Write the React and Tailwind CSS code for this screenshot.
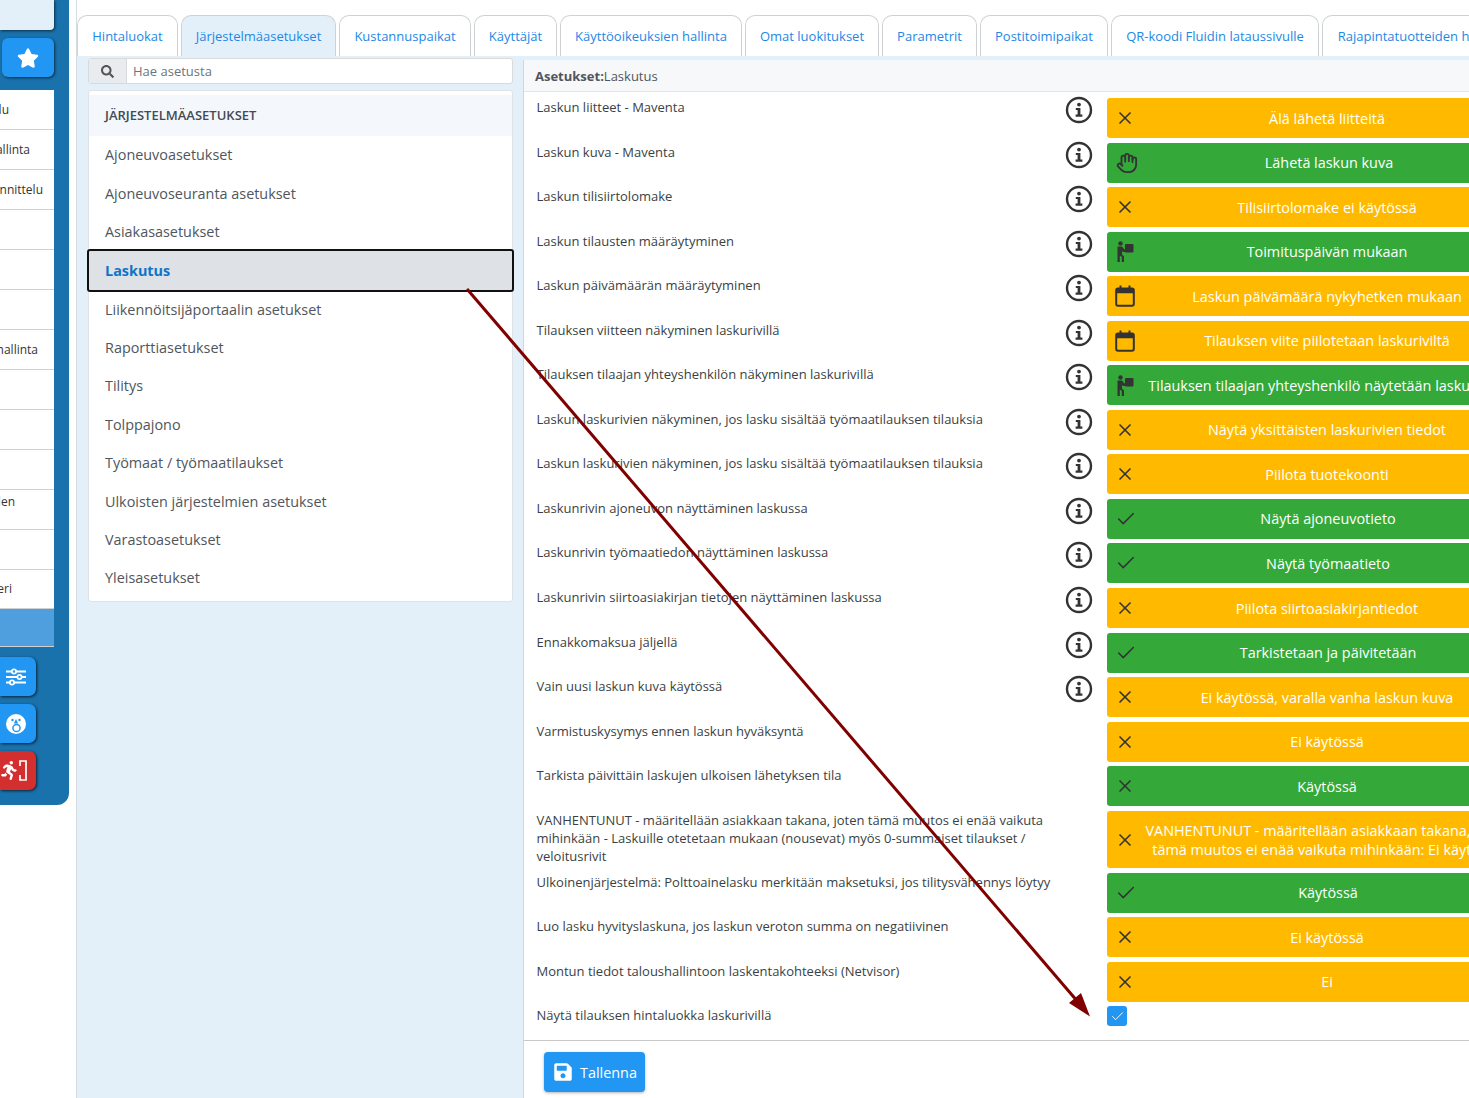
import { Check, Hand, X } from "lucide-react";
import { FaSearch, FaStar, FaSave } from "react-icons/fa";
import { FaPersonRunning } from "react-icons/fa6";

const tabs = [
  { label: "Hintaluokat", width: "w-[101px]" },
  { label: "Järjestelmäasetukset", width: "w-[155px]", active: true },
  { label: "Kustannuspaikat", width: "w-[132px]" },
  { label: "Käyttäjät", width: "w-[83px]" },
  { label: "Käyttöoikeuksien hallinta", width: "w-[182px]" },
  { label: "Omat luokitukset", width: "w-[134px]" },
  { label: "Parametrit", width: "w-[95px]" },
  { label: "Postitoimipaikat", width: "w-[128px]" },
  { label: "QR-koodi Fluidin lataussivulle", width: "w-[208px]" },
  { label: "Rajapintatuotteiden hallinta", width: "w-[200px]" },
];

const groups = [
  "Ajoneuvoasetukset",
  "Ajoneuvoseuranta asetukset",
  "Asiakasasetukset",
  "Laskutus",
  "Liikennöitsijäportaalin asetukset",
  "Raporttiasetukset",
  "Tilitys",
  "Tolppajono",
  "Työmaat / työmaatilaukset",
  "Ulkoisten järjestelmien asetukset",
  "Varastoasetukset",
  "Yleisasetukset",
];

const rows = [
  { text: "Laskun liitteet - Maventa", tone: "amber", icon: "x", value: "Älä lähetä liitteitä", info: true },
  { text: "Laskun kuva - Maventa", tone: "green", icon: "hand", value: "Lähetä laskun kuva", info: true },
  { text: "Laskun tilisiirtolomake", tone: "amber", icon: "x", value: "Tilisiirtolomake ei käytössä", info: true },
  { text: "Laskun tilausten määräytyminen", tone: "green", icon: "carry", value: "Toimituspäivän mukaan", info: true },
  { text: "Laskun päivämäärän määräytyminen", tone: "amber", icon: "calendar", value: "Laskun päivämäärä nykyhetken mukaan", info: true },
  { text: "Tilauksen viitteen näkyminen laskurivillä", tone: "amber", icon: "calendar", value: "Tilauksen viite piilotetaan laskuriviltä", info: true },
  { text: "Tilauksen tilaajan yhteyshenkilön näkyminen laskurivillä", tone: "green", icon: "carry", value: "Tilauksen tilaajan yhteyshenkilö näytetään laskurivillä", info: true },
  { text: "Laskun laskurivien näkyminen, jos lasku sisältää työmaatilauksen tilauksia", tone: "amber", icon: "x", value: "Näytä yksittäisten laskurivien tiedot", info: true },
  { text: "Laskun laskurivien näkyminen, jos lasku sisältää työmaatilauksen tilauksia", tone: "amber", icon: "x", value: "Piilota tuotekoonti", info: true },
  { text: "Laskunrivin ajoneuvon näyttäminen laskussa", tone: "green", icon: "check", value: "Näytä ajoneuvotieto", info: true },
  { text: "Laskunrivin työmaatiedon näyttäminen laskussa", tone: "green", icon: "check", value: "Näytä työmaatieto", info: true },
  { text: "Laskunrivin siirtoasiakirjan tietojen näyttäminen laskussa", tone: "amber", icon: "x", value: "Piilota siirtoasiakirjantiedot", info: true },
  { text: "Ennakkomaksua jäljellä", tone: "green", icon: "check", value: "Tarkistetaan ja päivitetään", info: true },
  { text: "Vain uusi laskun kuva käytössä", tone: "amber", icon: "x", value: "Ei käytössä, varalla vanha laskun kuva", info: true },
  { text: "Varmistuskysymys ennen laskun hyväksyntä", tone: "amber", icon: "x", value: "Ei käytössä" },
  { text: "Tarkista päivittäin laskujen ulkoisen lähetyksen tila", tone: "green", icon: "x", value: "Käytössä" },
  {
    text: "VANHENTUNUT - määritellään asiakkaan takana, joten tämä muutos ei enää vaikuta mihinkään - Laskuille otetetaan mukaan (nousevat) myös 0-summaiset tilaukset / veloitusrivit",
    tone: "amber",
    icon: "x",
    value: "VANHENTUNUT - määritellään asiakkaan takana, joten",
    value2: "tämä muutos ei enää vaikuta mihinkään: Ei käytössä",
    tall: true,
  },
  { text: "Ulkoinenjärjestelmä: Polttoainelasku merkitään maksetuksi, jos tilitysvähennys löytyy", tone: "green", icon: "check", value: "Käytössä" },
  { text: "Luo lasku hyvityslaskuna, jos laskun veroton summa on negatiivinen", tone: "amber", icon: "x", value: "Ei käytössä" },
  { text: "Montun tiedot taloushallintoon laskentakohteeksi (Netvisor)", tone: "amber", icon: "x", value: "Ei" },
];

const sideRows = [
  { text: "lu", pad: "pr-[45px]" },
  { text: "allinta", pad: "pr-[24px]" },
  { text: "nnittelu", pad: "pr-[11px]" },
  { text: "" },
  { text: "" },
  { text: "" },
  { text: "hallinta", pad: "pr-[16px]" },
  { text: "" },
  { text: "" },
  { text: "" },
  { text: "len", pad: "pr-[39px] pb-[16px]" },
  { text: "" },
  { text: "eri", pad: "pr-[42px]" },
];

function InfoIcon() {
  return (
    <svg width="28" height="28" viewBox="0 0 28 28" fill="none">
      <circle cx="14" cy="14" r="12" stroke="#333" strokeWidth="2.4" />
      <circle cx="14" cy="8.6" r="1.9" fill="#333" />
      <path d="M10.8 12h4.6v6.6h2v2.1h-6.8v-2.1h2v-4.5h-1.8z" fill="#333" />
    </svg>
  );
}

function CarryIcon() {
  return (
    <svg width="17" height="21" viewBox="0 0 17 21" fill="#333">
      <circle cx="3.5" cy="2.5" r="2.2" />
      <rect x="8" y="3" width="8.5" height="8.5" rx="1" />
      <path d="M0.5 5.5h4.5l2.5 3h1v2.5h-2.5l-1-1v3.5l2 2V21H4.8v-5l-2-1.5V21H0.5z" />
    </svg>
  );
}

function CalendarIcon() {
  return (
    <svg width="20" height="22" viewBox="0 0 20 22" fill="none">
      <rect x="1.2" y="3.4" width="17.6" height="17.4" rx="1.8" stroke="#333" strokeWidth="2" />
      <path d="M1.2 4.8a1.6 1.6 0 0 1 1.6-1.6h14.4a1.6 1.6 0 0 1 1.6 1.6v3.4H1.2z" fill="#333" />
      <path d="M5.5 0.5v4M14.5 0.5v4" stroke="#333" strokeWidth="2" />
    </svg>
  );
}

function RowIcon({ name }) {
  if (name === "x") return <X size={20} strokeWidth={2} color="#333" />;
  if (name === "check") return <Check size={22} strokeWidth={1.7} color="#333" />;
  if (name === "hand") return <Hand size={22} strokeWidth={2} color="#333" />;
  if (name === "carry") return <CarryIcon />;
  return <CalendarIcon />;
}

function SettingRow({ row }) {
  return (
    <div className={`flex shrink-0 ${row.tall ? "h-[57.5px]" : "h-[40px]"} mb-[4.56px]`}>
      <div className="w-[531px] shrink-0 pl-[12.5px] text-[13px] leading-[18px] text-[#3a3f44]">{row.text}</div>
      <div className="w-[40px] shrink-0 pl-[10px] -mt-[2px]">{row.info && <InfoIcon />}</div>
      <div
        className={`ml-[12px] grid w-[440px] shrink-0 grid-cols-[40px_360px_40px] items-center rounded-[3px] text-[14.4px] leading-[19px] text-white ${
          row.tone === "amber" ? "bg-[#ffba00]" : "bg-[#34a93a]"
        }`}
      >
        <span className={`flex justify-center ${row.icon === "hand" ? "pr-[1px]" : row.icon === "check" ? "pr-[2px]" : "pr-[4px]"}`}>
          <RowIcon name={row.icon} />
        </span>
        <span
          className={`flex flex-col items-center whitespace-nowrap text-center ${
            row.icon === "hand" ? "pl-[4px]" : row.icon === "check" ? "pl-[2px]" : ""
          }`}
        >
          <span>{row.value}</span>
          {row.value2 && <span>{row.value2}</span>}
        </span>
      </div>
    </div>
  );
}

function Sidebar() {
  return (
    <div className="w-[77px] shrink-0 border-r border-[#d5dde3] bg-white">
      <div className="flex h-[805px] w-[69px] flex-col rounded-br-[12px] bg-[#1a72ad] pr-[15px]">
        <div className="h-[30px] rounded-br-[4px] bg-[#e3f0f9] shadow-[1px_1px_3px_rgba(0,0,0,0.6)]" />
        <div className="ml-[2px] mt-[8px] flex h-[39px] items-center justify-center rounded-[6px] bg-[#2196f3] shadow-[1px_1px_3px_rgba(0,0,0,0.6)]">
          <FaStar size={22} color="white" />
        </div>
        {/* clipped menu */}
        <div className="mt-[13px] bg-white">
          {sideRows.map((row, i) => (
            <div
              key={i}
              className={`flex h-[40px] items-center justify-end overflow-hidden whitespace-nowrap border-b border-[#d0d0d0] text-[12px] text-[#333] last:h-[39px] ${row.pad || ""}`}
            >
              {row.text}
            </div>
          ))}
        </div>
        <div className="h-[38px] border-b border-[#d0d0d0] bg-[#4f9fdf]" />
        <div className="mt-[10px] flex w-[36px] flex-col gap-[8px]">
          <div className="flex h-[39px] items-center justify-center rounded-r-[7px] bg-[#2196f3] pr-[4px] shadow-[1px_1px_3px_rgba(0,0,0,0.7)]">
            <svg width="20" height="18" viewBox="0 0 20 18" fill="none" stroke="white" strokeWidth="1.8">
              <path d="M0 3.5h20M0 9h20M0 14.5h20" />
              <circle cx="8" cy="3.5" r="2.1" fill="#2196f3" />
              <circle cx="13.5" cy="9" r="2.1" fill="#2196f3" />
              <circle cx="6" cy="14.5" r="2.1" fill="#2196f3" />
            </svg>
          </div>
          <div className="flex h-[39px] items-center justify-center rounded-r-[7px] bg-[#2196f3] pr-[4px] shadow-[1px_1px_3px_rgba(0,0,0,0.7)]">
            <svg width="20" height="20" viewBox="0 0 20 20">
              <circle cx="10" cy="10" r="10" fill="white" />
              <circle cx="6.5" cy="6" r="1.2" fill="#2196f3" />
              <circle cx="13.5" cy="6" r="1.2" fill="#2196f3" />
              <path d="M10 5l2.2 4.5H7.8z" fill="#2196f3" />
              <circle cx="10.5" cy="14" r="3.6" fill="none" stroke="#2196f3" strokeWidth="1.5" />
            </svg>
          </div>
          <div className="flex h-[39px] items-center justify-center rounded-r-[7px] bg-[#d32f2f] pr-[9px] shadow-[1px_1px_3px_rgba(0,0,0,0.7)]">
            <FaPersonRunning size={19} color="white" />
            <svg width="8" height="21" viewBox="0 0 8 21" fill="none" stroke="white" strokeWidth="1.7">
              <path d="M1 6V1h6v19H1v-5" />
            </svg>
          </div>
        </div>
      </div>
    </div>
  );
}

export default function App() {
  return (
    <div className="relative flex h-[1098px] w-[1469px] overflow-hidden bg-white font-['Open_Sans',sans-serif]">
      <Sidebar />

      <div className="flex min-w-0 flex-1 flex-col">
        {/* Tabs */}
        <div className="flex h-[56px] shrink-0 gap-[3px] pt-[15px]">
          {tabs.map((tab) => (
            <div
              key={tab.label}
              className={`flex ${tab.width} h-[41px] shrink-0 items-center justify-center whitespace-nowrap rounded-t-[10px] border border-b-0 border-[#cfd2d4] pt-[1px] text-[13px] text-[#1e88e5] ${
                tab.active ? "bg-[#e3f0f9]" : "bg-white"
              }`}
            >
              {tab.label}
            </div>
          ))}
        </div>

        <div className="flex min-h-0 flex-1 bg-[#e3f0f9] pl-[11px]">
          {/* Left column */}
          <div className="w-[425px] shrink-0 pt-[2px]">
            <div className="flex h-[26px] rounded-[3px] border border-[#d8dadc] bg-white">
              <div className="flex w-[38px] items-center justify-center border-r border-[#d8dadc] bg-[#e9ecef]">
                <FaSearch size={13} color="#555" />
              </div>
              <div className="flex items-center pl-[6px] pt-[1px] text-[13px] text-[#6c757d]">Hae asetusta</div>
            </div>
            <div className="relative mt-[6px] rounded-[3px] border border-[#dfe3e6] bg-white">
              <div className="mt-[4px] flex h-[41px] items-center bg-[#f4f8fc] pl-[16px] pt-[1px] text-[13px] font-semibold text-[#444b52]">
                JÄRJESTELMÄASETUKSET
              </div>
              <div className="pb-[4px]">
                {groups.map((group) =>
                  group === "Laskutus" ? (
                    <div
                      key={group}
                      className="-mx-[2px] flex h-[43px] -my-[2px] items-center rounded-[3px] border-2 border-[#111] bg-[#dee2e6] pl-[16px] text-[14.4px] font-bold text-[#0d74c9]"
                    >
                      {group}
                    </div>
                  ) : (
                    <div key={group} className="flex h-[38.4px] items-center pl-[16px] text-[14.4px] text-[#50565c]">
                      {group}
                    </div>
                  ),
                )}
              </div>
            </div>
          </div>

          {/* Settings */}
          <div className="ml-[10px] mt-[4px] flex min-w-0 flex-1 flex-col overflow-hidden border-l border-[#d3d6d9] bg-white">
            <div className="flex h-[32px] shrink-0 items-center border-b border-[#e3e5e8] bg-[#f7f8fa] pl-[11px] pt-[2px] text-[13px] text-[#50565c]">
              <span className="font-bold">Asetukset:</span>Laskutus
            </div>
            <div className="flex h-[948px] shrink-0 flex-col pt-[6px]">
              {rows.map((row, i) => (
                <SettingRow key={i} row={row} />
              ))}
              <div className="flex h-[20px] shrink-0">
                <div className="w-[583px] shrink-0 pl-[12.5px] text-[13px] leading-[18px] text-[#3a3f44]">
                  Näytä tilauksen hintaluokka laskurivillä
                </div>
                <div className="flex h-[20px] w-[20px] items-center justify-center rounded-[3px] bg-[#2196f3]">
                  <Check size={15} strokeWidth={1.5} color="white" />
                </div>
              </div>
            </div>
            <div className="flex-1 border-t border-[#c8c8c8] pl-[20px] pt-[11px]">
              <div className="flex h-[40px] w-[101px] items-center gap-[7px] rounded-[4px] bg-[#2196f3] pl-[9px] text-[14.4px] text-white shadow-[0_1px_3px_rgba(0,0,0,0.3)]">
                <FaSave size={20} color="white" />
                <span className="pt-[1px]">Tallenna</span>
              </div>
            </div>
          </div>
        </div>
      </div>

      {/* Annotation arrow */}
      <svg className="pointer-events-none absolute left-0 top-0" width="1469" height="1098" viewBox="0 0 1469 1098" fill="none">
        <path d="M467 289L1078 1002" stroke="#800000" strokeWidth="3" />
        <path d="M1090 1016.5L1069 1003L1081 993Z" fill="#800000" />
      </svg>
    </div>
  );
}
